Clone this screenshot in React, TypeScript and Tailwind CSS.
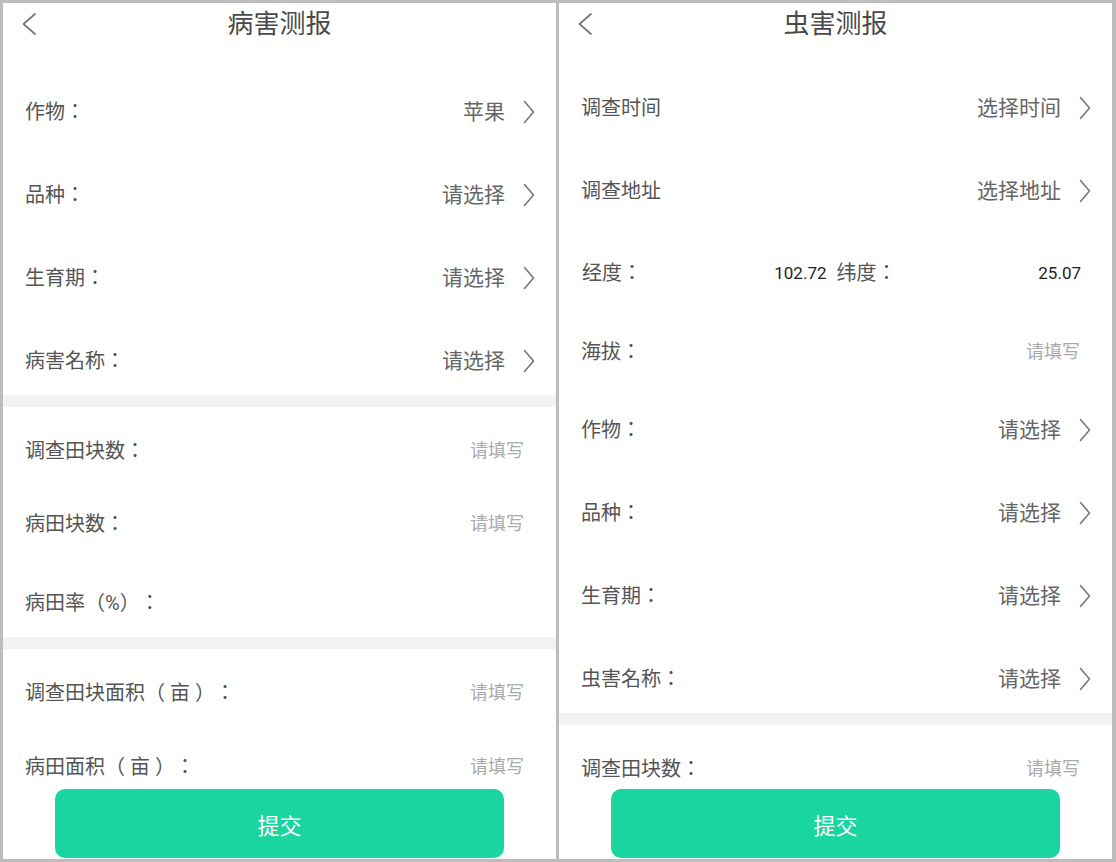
const FONT = "font-['Roboto','Noto_Sans_CJK_SC',sans-serif] [text-spacing-trim:space-all]";
const LABEL_FONT = "font-['Roboto','Noto_Sans_CJK_JP',sans-serif]";

type Kind = "select" | "input" | "none";

function Chevron() {
  return (
    <svg width="12" height="24" viewBox="0 0 12 24" fill="none" className="shrink-0">
      <path d="M1.5 1.5 L10.5 12 L1.5 22.5" stroke="#777" strokeWidth="1.6" strokeLinecap="round" strokeLinejoin="round" />
    </svg>
  );
}

function Row({ label, value, kind, className }: { label: string; value?: string; kind: Kind; className: string }) {
  return (
    <div
      className={`flex items-center justify-between h-[28px] pl-[22px] ${kind === "select" ? "pr-[21px]" : "pr-[32px]"} ${className}`}
    >
      <span className={`text-[20px] text-[#555] leading-none whitespace-pre ${LABEL_FONT}`}>{label}</span>
      {kind === "select" && (
        <div className="flex items-center gap-[18px]">
          <span className="text-[21px] text-[#666] leading-none">{value}</span>
          <Chevron />
        </div>
      )}
      {kind === "input" && <span className="text-[18px] text-[#aaa] leading-none">请填写</span>}
    </div>
  );
}

function Header({ title }: { title: string }) {
  return (
    <div className="relative h-[42px] flex items-center justify-center shrink-0">
      <svg width="16" height="22" viewBox="0 0 16 22" fill="none" className="absolute left-[18px] top-[10px]">
        <path d="M14 1 L2.5 11 L14 21" stroke="#777" strokeWidth="1.7" strokeLinecap="round" strokeLinejoin="round" />
      </svg>
      <span className="text-[26px] text-[#4a4a4a] leading-none">{title}</span>
    </div>
  );
}

function Submit() {
  return (
    <button className="shrink-0 h-[69px] mx-[52px] mb-[1px] pt-[5px] rounded-[10px] bg-[#1ad59f] text-white text-[22px] flex items-center justify-center">
      提交
    </button>
  );
}

function Gap() {
  return <div className="h-[12px] bg-[#f2f2f2]" />;
}

function DiseasePanel() {
  return (
    <div className="w-[553px] h-[856px] bg-white flex flex-col">
      <Header title="病害测报" />
      <div className="flex-1 min-h-0 overflow-hidden">
        <div className="pb-[20px]">
          <Row label="作物：" value="苹果" kind="select" className="mt-[53px]" />
          <Row label="品种：" value="请选择" kind="select" className="mt-[55px]" />
          <Row label="生育期：" value="请选择" kind="select" className="mt-[55px]" />
          <Row label="病害名称：" value="请选择" kind="select" className="mt-[55px]" />
        </div>
        <Gap />
        <div className="pb-[20px]">
          <Row label="调查田块数：" kind="input" className="mt-[30px]" />
          <Row label="病田块数：" kind="input" className="mt-[45px]" />
          <Row label="病田率（%）：" kind="none" className="mt-[51px]" />
        </div>
        <Gap />
        <div>
          <Row label="调查田块面积（ 亩 ）：" kind="input" className="mt-[30px]" />
          <Row label="病田面积（ 亩 ）：" kind="input" className="mt-[46px]" />
        </div>
      </div>
      <Submit />
    </div>
  );
}

function PestPanel() {
  return (
    <div className="w-[553px] h-[856px] bg-white flex flex-col">
      <Header title="虫害测报" />
      <div className="flex-1 min-h-0 overflow-hidden">
        <div className="pb-[20px]">
          <Row label="调查时间" value="选择时间" kind="select" className="mt-[49px]" />
          <Row label="调查地址" value="选择地址" kind="select" className="mt-[55px]" />
          {/* coordinates */}
          <div className="flex items-center gap-[10px] h-[28px] pl-[23px] pr-[31px] mt-[54px]">
            <div className="flex-1 flex items-center justify-between">
              <span className={`text-[20px] text-[#555] leading-none ${LABEL_FONT}`}>经度：</span>
              <span className="text-[17px] text-[#222] leading-none">102.72</span>
            </div>
            <div className="flex-1 flex items-center justify-between">
              <span className={`text-[20px] text-[#555] leading-none ${LABEL_FONT}`}>纬度：</span>
              <span className="text-[17px] text-[#222] leading-none">25.07</span>
            </div>
          </div>
          <Row label="海拔：" kind="input" className="mt-[51px]" />
          <Row label="作物：" value="请选择" kind="select" className="mt-[50px]" />
          <Row label="品种：" value="请选择" kind="select" className="mt-[55px]" />
          <Row label="生育期：" value="请选择" kind="select" className="mt-[55px]" />
          <Row label="虫害名称：" value="请选择" kind="select" className="mt-[55px]" />
        </div>
        <Gap />
        <div>
          <Row label="调查田块数：" kind="input" className="mt-[30px]" />
        </div>
      </div>
      <Submit />
    </div>
  );
}

export default function App() {
  return (
    <div className={`w-[1116px] h-[862px] bg-[#bdbdbd] pt-[3px] pl-[3px] flex gap-[3px] ${FONT}`}>
      <DiseasePanel />
      <PestPanel />
    </div>
  );
}
